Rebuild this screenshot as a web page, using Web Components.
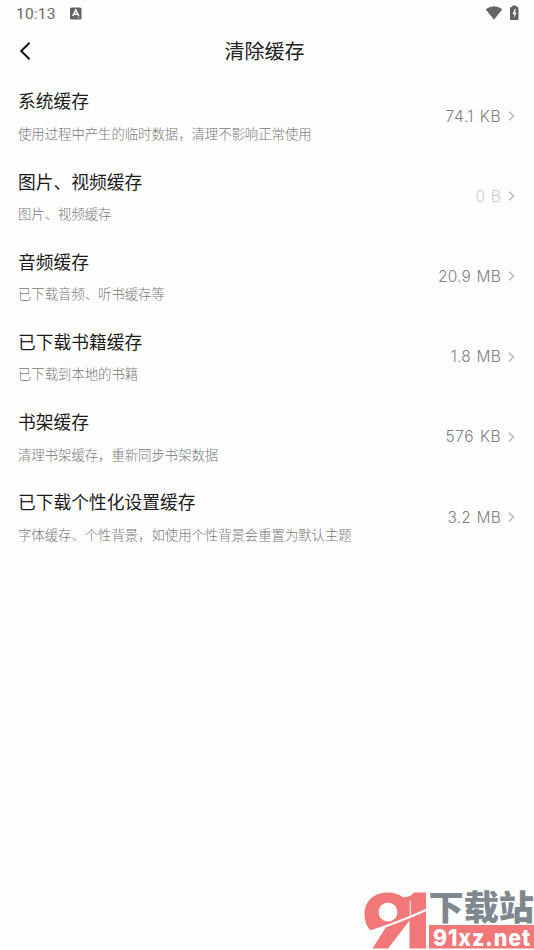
<!DOCTYPE html>
<html lang="zh-CN">
<head>
<meta charset="utf-8">
<title>清除缓存</title>
<style>
html,body{margin:0;height:100%;background:#fefefe}
body{overflow:hidden;font-family:"Noto Sans CJK SC",sans-serif}
</style>
</head>
<body>
<cache-screen></cache-screen>
<script>
const define = (name, html, init) => {
  const t = document.createElement('template');
  t.innerHTML = html;
  customElements.define(name, class extends HTMLElement {
    connectedCallback() {
      if (this.shadowRoot) return;
      this.attachShadow({mode: 'open'}).append(t.content.cloneNode(true));
      if (init) init(this, this.shadowRoot);
    }
  });
};

define('status-bar', `
<style>
:host{display:flex;align-items:center;height:28px;box-sizing:border-box;padding:0 15.500px 0 16px;color:#6a6a6a}
time{font:400 15.500px/28px Roboto,sans-serif;letter-spacing:.2px;width:54px}
.gap{flex:1}
svg{display:block;margin-bottom:1px}
.wifi{margin-right:7px;margin-bottom:2px}
.battery{margin-bottom:2px}
</style>
<time>10:13</time>
<svg width="12" height="13" viewBox="0 0 12 13"><rect y=".5" width="11.500" height="12" rx="1.500" fill="#626262"/><path d="M2.800 9.200L5.800 3l3 6.200M4 7.300h3.700" fill="none" stroke="#fff" stroke-width="1.500"/><path d="M7 10.700h3" stroke="#aaa" stroke-width=".8"/></svg>
<span class="gap"></span>
<svg class="wifi" width="18" height="16" viewBox="0 0 18 16"><path d="M.6 4.200Q9-1.500 17.400 4.200L9 14.800Z" fill="#666"/></svg>
<svg class="battery" width="9" height="16" viewBox="0 0 9 16"><path d="M2.500.5h4V2h1q1 0 1 1v11q0 1-1 1h-6.500q-1 0-1-1V3q0-1 1-1h1Z" fill="#616161"/><path d="M5 3.800L2.500 9h1.800l-.4 4L6.600 7.700H4.900l1-3.900Z" fill="#fff"/></svg>
`);

define('nav-bar', `
<style>
:host{display:grid;grid-template-columns:40px 1fr 40px;align-items:center;height:46px;padding:0 10px 0 5px;color:#222}
h1{margin:0;font-size:20px;line-height:46px;font-weight:400;text-align:center}
svg{display:block;margin-left:14px}
</style>
<svg width="13" height="20" viewBox="0 0 13 20"><path d="M10.600 1.700L2.200 10l8.400 8.300" fill="none" stroke="#161616" stroke-width="2"/></svg>
<h1><slot></slot></h1>
`);

define('cache-row', `
<style>
:host{display:flex;align-items:center;justify-content:space-between;height:80.200px;box-sizing:border-box;padding:0 18px}
h2{margin:0;font-size:17.750px;line-height:26px;font-weight:400;color:#1c1c1c}
p{margin:10.500px 0 0;font-size:13.350px;line-height:20px;font-weight:300;color:#777}
.text{margin-top:-1px}
.end{display:flex;align-items:center;color:#808080}
.size{font:300 15.500px/20px Inter,sans-serif;letter-spacing:var(--tracking,.2px);word-spacing:1px;padding-top:1px}
:host([empty]) .size{color:#ccc}
svg{display:block;margin-left:7px}
</style>
<div class="text"><h2><slot></slot></h2><p><slot name="note"></slot></p></div>
<div class="end"><span class="size"></span><svg width="8" height="12" viewBox="0 0 8 12"><path d="M1 1.700L5.400 6 1 10.300" fill="none" stroke="#c2c2c2" stroke-width="1.700"/></svg></div>
`, (el, root) => { root.querySelector('.size').textContent = el.getAttribute('size'); });

define('site-mark', `
<style>
:host{display:block}
svg{display:block}
</style>
<svg width="174" height="64" viewBox="360 886 174 64">
<g fill="#f27779">
<path fill-rule="evenodd" d="M387 892.500c15 0 23 8 23 20v7.500L388 948.500h-15.500L386 927l-14.500 4c-4-3-7-9-7-17 0-12.500 9.500-21.500 22.500-21.500ZM388 902.500a9.500 9.500 0 1 0 0 19 9.500 9.500 0 1 0 0-19Z"/>
<path d="M403 897.500q8-.5 11-5h12v56h-16.500v-29l1-4q0-11-7.500-18Z"/>
</g>
<path d="M371 931.200Q400 922 427 909.500" fill="none" stroke="#fefefe" stroke-width="2"/>
<path d="M410.300 900.500v16" fill="none" stroke="#fefefe" stroke-width=".9"/>
<text x="428.500" y="919.800" font-family="Noto Sans CJK SC,sans-serif" font-size="34.500" font-weight="900" fill="#7e888e" textLength="105.500" lengthAdjust="spacingAndGlyphs">下载站</text>
<rect x="429" y="925" width="105" height="23.500" fill="#f27779"/>
<text x="433" y="946" font-family="Inter,sans-serif" font-size="23.500" font-weight="800" letter-spacing="1" fill="#fff" textLength="98" lengthAdjust="spacingAndGlyphs">91xz.net</text>
</svg>
`);

define('cache-screen', `
<style>
:host{display:flex;flex-direction:column;height:950px;background:#fefefe;position:relative}
main{padding-top:2px;flex:1}
site-mark{position:absolute;right:0;bottom:0}
</style>
<status-bar></status-bar>
<nav-bar>清除缓存</nav-bar>
<main>
<cache-row size="74.1 KB" style="--tracking:.55px">系统缓存<span slot="note">使用过程中产生的临时数据，清理不影响正常使用</span></cache-row>
<cache-row size="0 B" empty>图片、视频缓存<span slot="note">图片、视频缓存</span></cache-row>
<cache-row size="20.9 MB">音频缓存<span slot="note">已下载音频、听书缓存等</span></cache-row>
<cache-row size="1.8 MB">已下载书籍缓存<span slot="note">已下载到本地的书籍</span></cache-row>
<cache-row size="576 KB" style="--tracking:.5px">书架缓存<span slot="note">清理书架缓存，重新同步书架数据</span></cache-row>
<cache-row size="3.2 MB">已下载个性化设置缓存<span slot="note">字体缓存、个性背景，如使用个性背景会重置为默认主题</span></cache-row>
</main>
<site-mark></site-mark>
`);
</script>
</body>
</html>
